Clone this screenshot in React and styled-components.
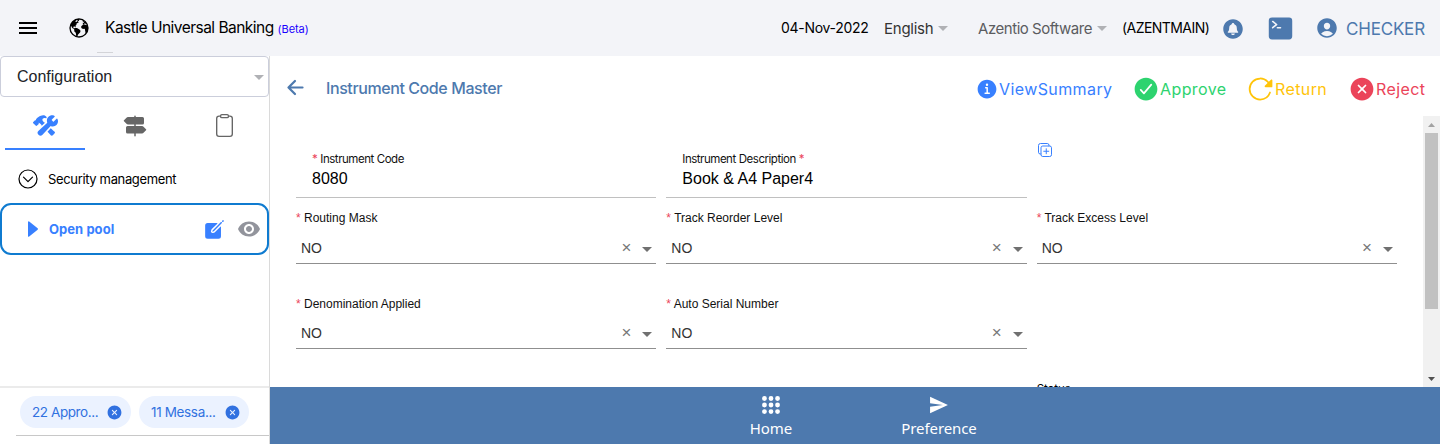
import React from 'react';
import styled, { createGlobalStyle } from 'styled-components';
import {
  IoEarth, IoNotificationsCircle, IoTerminal, IoPersonCircle, IoInformationCircle,
  IoCheckmarkCircle, IoReload, IoCloseCircle, IoConstruct, IoTrailSign, IoClipboardOutline,
  IoChevronDownCircleOutline, IoCreate, IoDuplicateOutline, IoArrowBack, IoApps,
} from 'react-icons/io5';
import { IoMdMenu, IoMdSend } from 'react-icons/io';
import { MdVisibility } from 'react-icons/md';

const inter = 'Inter, "Liberation Sans", sans-serif';
const arial = '"Liberation Sans", Arial, sans-serif';
const steel = '#4d79ae';
const blue = '#3880ff';

const GlobalStyle = createGlobalStyle`
  * { box-sizing: border-box; }
  body { margin: 0; background: #fff; font-family: ${inter}; color: #000; overflow: hidden; }
  svg { display: block; flex: none; }
`;

const Page = styled.div`
  display: flex;
  flex-direction: column;
  width: 1440px;
  height: 444px;
`;

const Header = styled.header`
  display: flex;
  align-items: center;
  flex: none;
  height: 56px;
  background: #f3f4f8;
  padding: 0 14px 0 16px;
  white-space: nowrap;
`;

const HeaderItem = styled.div`
  display: flex;
  align-items: center;
  flex: none;
  width: ${p => p.$w}px;
  padding-top: ${p => p.$drop || 0}px;
  color: ${p => p.$color || '#000'};
  font-size: ${p => p.$size || 14}px;
  letter-spacing: ${p => p.$ls || 0}px;
  line-height: 20px;
`;

const Brand = styled.div`
  display: flex;
  flex-direction: column;
  flex: 1;
  height: 56px;
  padding-top: 18px;
`;

const BrandName = styled.div`
  font-size: 15.5px;
  line-height: 20px;
  letter-spacing: -0.52px;
  padding-left: 8px;
`;

const Beta = styled.span`
  font-size: 11px;
  letter-spacing: -0.05px;
  color: #1a00ff;
`;

const BrandRule = styled.div`
  width: 16px;
  height: 1px;
  margin-top: 13px;
  background: #d3d4d8;
`;

const Caret = styled.span`
  flex: none;
  width: 0;
  height: 0;
  margin-left: ${p => p.$gap || 0}px;
  margin-top: ${p => p.$drop || 0}px;
  border: 5px solid transparent;
  border-top-color: ${p => p.$color || '#b0b1b5'};
  border-bottom: 0;
`;

const Body = styled.div`
  display: flex;
  flex: 1;
  min-height: 0;
`;

const Sidebar = styled.aside`
  display: flex;
  flex-direction: column;
  flex: none;
  width: 270px;
  border-right: 1px solid #dadada;
`;

const ModuleSelect = styled.div`
  display: flex;
  align-items: center;
  justify-content: space-between;
  height: 41px;
  padding: 0 4px 0 16px;
  border: 1px solid #cbcedb;
  border-radius: 4px;
  font: 16px/20px ${arial};
  color: #222428;
`;

const Tabs = styled.div`
  display: flex;
  gap: 9.5px;
  height: 53px;
  padding-left: 5px;
`;

const Tab = styled.div`
  display: flex;
  align-items: center;
  justify-content: center;
  flex: none;
  width: 80px;
  padding-top: 6px;
  color: ${p => (p.$active ? blue : '#666')};
  border-bottom: 2px solid ${p => (p.$active ? blue : 'transparent')};
`;

const ThinClipboard = styled(IoClipboardOutline)`
  & * { stroke-width: 28px; }
`;

const ThinChevron = styled(IoChevronDownCircleOutline)`
  & * { stroke-width: 26px; }
`;

const Group = styled.div`
  display: flex;
  align-items: center;
  gap: 8px;
  height: 53px;
  padding: 5px 0 0 16px;
  font-size: 13px;
  letter-spacing: -0.35px;
`;

const PoolRow = styled.div`
  display: flex;
  align-items: center;
  height: 52px;
  padding: 0 6px 0 26px;
  border: 2px solid #0f7bd0;
  border-radius: 11px;
`;

const PoolName = styled.span`
  flex: 1;
  margin-left: 11px;
  font-size: 13px;
  font-weight: 700;
  letter-spacing: 0.05px;
  color: ${blue};
`;

const EyeSlot = styled.span`
  margin-left: 11px;
  color: #92949c;
`;

const ChipsBar = styled.div`
  display: flex;
  flex-direction: column;
  height: 58px;
  margin-top: auto;
  border-top: 2px solid #ebebeb;
  padding: 8px 0 0 16px;
`;

const Chips = styled.div`
  display: flex;
  gap: 8px;
  height: 40px;
  padding-left: 4px;
  border-bottom: 1px solid #c8c8c8;
`;

const Chip = styled.div`
  display: flex;
  align-items: center;
  justify-content: space-between;
  width: ${p => p.$w}px;
  height: 32px;
  padding: 0 8px 0 12px;
  border-radius: 16px;
  background: #ebf2ff;
  color: #3171e0;
  font-size: 13.5px;
  letter-spacing: ${p => p.$ls}px;
  white-space: nowrap;
`;

const Main = styled.main`
  display: flex;
  flex-direction: column;
  flex: 1;
  min-width: 0;
`;

const TitleBar = styled.div`
  display: flex;
  align-items: center;
  flex: none;
  height: 60px;
  padding: 5px 15px 0 14px;
  color: ${steel};
`;

const BoldArrow = styled(IoArrowBack)`
  margin-top: -2px;
  & * { stroke-width: 50px; }
`;

const Title = styled.h1`
  flex: 1;
  margin: -2px 0 0 19px;
  font-size: 16px;
  font-weight: 500;
  letter-spacing: -0.41px;
`;

const Action = styled.div`
  display: flex;
  align-items: center;
  width: ${p => p.$w}px;
  margin-left: ${p => p.$ml}px;
  color: ${p => p.$color};
  font-size: 16px;
  letter-spacing: 0.4px;
  white-space: nowrap;
`;

const Scroller = styled.div`
  display: flex;
  flex: 1;
  min-height: 0;
`;

const Form = styled.div`
  display: grid;
  grid-template-columns: repeat(3, 1fr);
  grid-template-rows: 82px 85px 86px 60px;
  column-gap: 10px;
  flex: 1;
  padding: 0 26px;
  height: 271px;
  overflow: hidden;
`;

const TextField = styled.div`
  height: 82px;
  padding: 36px 16px 0;
  border-bottom: 1px solid #c0c0c0;
`;

const TextLabel = styled.div`
  font-size: 11.5px;
  line-height: 14px;
  letter-spacing: -0.48px;
  word-spacing: 0.3px;
  color: #111;
`;

const TextValue = styled.div`
  margin-top: 3px;
  font: 16px/20px ${arial};
`;

const Star = styled.span`
  color: #eb445a;
`;

const SelectLabel = styled.div`
  padding-top: ${p => p.$top}px;
  font: 12px/14px ${arial};
  color: #111;
`;

const SelectBox = styled.div`
  display: flex;
  align-items: center;
  height: 32px;
  margin-top: ${p => p.$gap}px;
  padding: 0 4px 0 5px;
  border-bottom: 1px solid #8f8f8f;
  font: 14px/16px ${arial};
  color: #333;
`;

const Spacer = styled.span`
  flex: 1;
`;

const ClearMark = styled.span`
  margin-top: 1px;
  font: 17px/18px ${arial};
  color: #777;
`;

const AddSlot = styled.div`
  padding-top: 26px;
  color: ${blue};
`;

const StatusLabel = styled.div`
  grid-column: 3;
  grid-row: 4;
  padding-top: 13px;
  font-size: 11.5px;
  line-height: 14px;
`;

const Track = styled.div`
  display: flex;
  flex-direction: column;
  align-items: center;
  width: 17px;
  background: #f1f1f1;
`;

const Thumb = styled.div`
  width: 13px;
  height: 176px;
  background: #c1c1c1;
`;

const TrackArrow = styled.div`
  display: flex;
  align-items: center;
  justify-content: center;
  height: 17px;
  margin-top: ${p => (p.$end ? 'auto' : 0)};
`;

const BottomNav = styled.nav`
  display: flex;
  flex: none;
  height: 57px;
  padding-left: 417px;
  background: ${steel};
`;

const NavItem = styled.div`
  display: flex;
  flex-direction: column;
  align-items: center;
  gap: 2px;
  width: 168px;
  padding-top: 7px;
  color: #fff;
  font: 15px/20px "Noto Sans", sans-serif;
  letter-spacing: -0.1px;
`;

function TextInput({ label, value, starAfter }) {
  return (
    <TextField>
      <TextLabel>
        {!starAfter && <Star>* </Star>}{label}{starAfter && <Star> *</Star>}
      </TextLabel>
      <TextValue>{value}</TextValue>
    </TextField>
  );
}

function Select({ label, top = 13, gap = 7 }) {
  return (
    <div>
      <SelectLabel $top={top}><Star>* </Star>{label}</SelectLabel>
      <SelectBox $gap={gap}>
        NO
        <Spacer />
        <ClearMark>×</ClearMark>
        <Caret $gap={11} $drop={3} $color="#707070" />
      </SelectBox>
    </div>
  );
}

export default function App() {
  return (
    <>
      <GlobalStyle />
      <Page>
        <Header>
          <HeaderItem $w={52}><IoMdMenu size={24} /></HeaderItem>
          <HeaderItem $w={29}><IoEarth size={22} /></HeaderItem>
          <Brand>
            <BrandName>Kastle Universal Banking <Beta>(Beta)</Beta></BrandName>
            <BrandRule />
          </Brand>
          <HeaderItem $w={103} $ls={-0.3}>04-Nov-2022</HeaderItem>
          <HeaderItem $w={94} $drop={2} $color="#333" $size={15} $ls={-0.25}>English<Caret $gap={5} $drop={-2} /></HeaderItem>
          <HeaderItem $w={144} $drop={2} $color="#5b5c60" $size={15} $ls={-0.46}>Azentio Software<Caret $gap={5} $drop={-2} /></HeaderItem>
          <HeaderItem $w={99} $ls={-0.55}>(AZENTMAIN)</HeaderItem>
          <HeaderItem $w={47} $drop={1} $color={steel}><IoNotificationsCircle size={24} /></HeaderItem>
          <HeaderItem $w={47} $drop={1} $color={steel}><IoTerminal size={25} /></HeaderItem>
          <HeaderItem $w={31} $color={steel}><IoPersonCircle size={24} /></HeaderItem>
          <HeaderItem $w={80} $drop={1} $color={steel} $size={17} $ls={-0.2}>CHECKER</HeaderItem>
        </Header>
        <Body>
          <Sidebar>
            <ModuleSelect>Configuration<Caret $drop={2} /></ModuleSelect>
            <Tabs>
              <Tab $active><IoConstruct size={25} /></Tab>
              <Tab><IoTrailSign size={24} /></Tab>
              <Tab><ThinClipboard size={25} /></Tab>
            </Tabs>
            <Group><ThinChevron size={24} />Security management</Group>
            <PoolRow>
              <svg width="10" height="16" viewBox="0 0 10 16">
                <path d="M0 .8Q.3-.2 1.2.4L9.6 7.3q.7.7 0 1.4L1.2 15.6Q.3 16.2 0 15.2z" fill={blue} />
              </svg>
              <PoolName>Open pool</PoolName>
              <IoCreate size={23} color={blue} />
              <EyeSlot><MdVisibility size={24} /></EyeSlot>
            </PoolRow>
            <ChipsBar>
              <Chips>
                <Chip $w={111} $ls={-0.42}>22 Appro...<IoCloseCircle size={17} /></Chip>
                <Chip $w={110} $ls={-0.35}>11 Messa...<IoCloseCircle size={17} /></Chip>
              </Chips>
            </ChipsBar>
          </Sidebar>
          <Main>
            <TitleBar>
              <BoldArrow size={23} />
              <Title>Instrument Code Master</Title>
              <Action $w={136} $color={blue}><IoInformationCircle size={24} />ViewSummary</Action>
              <Action $w={94} $ml={21} $color="#2dd36f"><IoCheckmarkCircle size={28} />Approve</Action>
              <Action $w={80} $ml={21} $color="#ffc409"><IoReload size={28} />Return</Action>
              <Action $w={77} $ml={21} $color="#eb445a"><IoCloseCircle size={28} />Reject</Action>
            </TitleBar>
            <Scroller>
              <Form>
                <TextInput label="Instrument Code" value="8080" />
                <TextInput label="Instrument Description" value="Book & A4 Paper4" starAfter />
                <AddSlot><IoDuplicateOutline size={16} /></AddSlot>
                <Select label="Routing Mask" />
                <Select label="Track Reorder Level" />
                <Select label="Track Excess Level" />
                <Select label="Denomination Applied" top={14} gap={6} />
                <Select label="Auto Serial Number" top={14} gap={6} />
                <StatusLabel>Status</StatusLabel>
              </Form>
              <Track>
                <TrackArrow>
                  <svg width="7" height="4"><path d="M0 4 3.5 0 7 4z" fill="#a3a3a3" /></svg>
                </TrackArrow>
                <Thumb />
                <TrackArrow $end>
                  <svg width="7" height="4"><path d="M0 0 3.5 4 7 0z" fill="#505050" /></svg>
                </TrackArrow>
              </Track>
            </Scroller>
            <BottomNav>
              <NavItem><IoApps size={22} />Home</NavItem>
              <NavItem><IoMdSend size={22} />Preference</NavItem>
            </BottomNav>
          </Main>
        </Body>
      </Page>
    </>
  );
}
